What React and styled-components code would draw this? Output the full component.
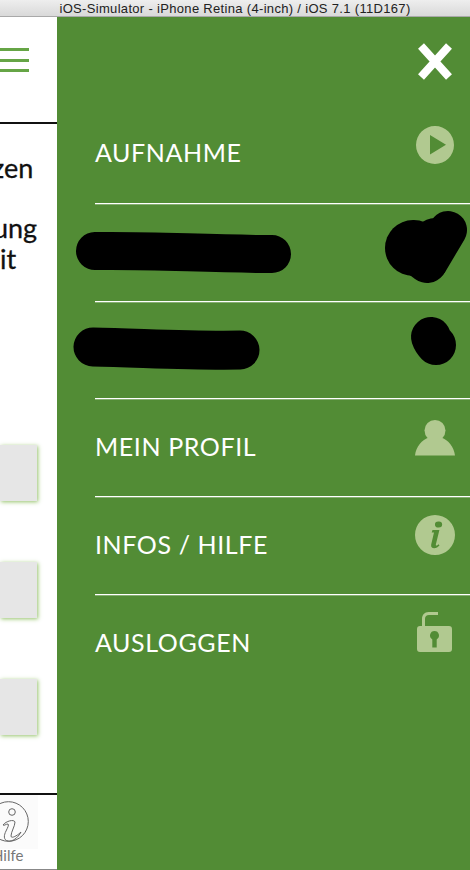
import styled, { createGlobalStyle } from 'styled-components';

const GlobalStyle = createGlobalStyle`
  html, body {
    margin: 0;
    padding: 0;
    background: #fff;
  }
`;

const menuItems = [
  { label: 'AUFNAHME', icon: 'play' },
  { label: '', icon: '', scribble: 'row2' },
  { label: '', icon: '', scribble: 'row3' },
  { label: 'MEIN PROFIL', icon: 'user' },
  { label: 'INFOS / HILFE', icon: 'info' },
  { label: 'AUSLOGGEN', icon: 'lock' },
];

const PlayIcon = () => (
  <IconSvg width="40" height="40" viewBox="0 0 40 40">
    <path
      fillRule="evenodd"
      d="M20 1a19 19 0 1 1 0 38a19 19 0 1 1 0-38zM15 10v19.500l16-9.700z"
    />
  </IconSvg>
);

const UserIcon = () => (
  <IconSvg width="42" height="36" viewBox="0 0 42 36">
    <circle cx="21" cy="10.500" r="10.500" />
    <path d="M1 35.500c1-9 7-16 14-18c4 2 8 2 12 0c7 2 13 9 14 18z" />
  </IconSvg>
);

const InfoIcon = () => (
  <IconSvg width="40" height="40" viewBox="0 0 40 40">
    <path
      fillRule="evenodd"
      d="M20 0a20 20 0 1 1 0 40a20 20 0 1 1 0-40zM23.500 6.500a3.300 3 -15 1 0 0.100 6a3.300 3 -15 1 0-0.100-6zM17.500 15l-0.800 2.500h2.300l-2.800 12c-0.500 2.600 0.800 3.800 3 3.800c2 0 3.800-1 5.300-3l-1-1c-0.700 0.800-1.500 1.300-2 1.300c-0.600 0-0.800-0.500-0.600-1.300l3.500-14.300z"
    />
  </IconSvg>
);

const LockIcon = () => (
  <IconSvg width="36" height="40" viewBox="0 0 36 40">
    <path
      fillRule="evenodd"
      d="M3 14h29a3 3 0 0 1 3 3v20a3 3 0 0 1-3 3h-29a3 3 0 0 1-3-3v-20a3 3 0 0 1 3-3zM17.500 19a4.500 4.500 0 0 0-2.200 8.400v8.100h4.400v-8.100a4.500 4.500 0 0 0-2.200-8.400z"
    />
    <path d="M5 14v-7c0-4 2.500-7 6.500-7h9.500v3h-9c-2.500 0-4 1.500-4 4v7z" />
  </IconSvg>
);

const icons = { play: PlayIcon, user: UserIcon, info: InfoIcon, lock: LockIcon };

// the two rows that are blacked out by hand in the picture
const renderScribble = (name) => {
  if (name === 'row2') {
    return (
      <>
        <Scribble $left={-20} $top={25} width="220" height="46" viewBox="0 0 220 46">
          <path d="M20 22C80 21 130 25 197 25" strokeWidth="38" />
        </Scribble>
        <Scribble $left={290} $top={6} width="86" height="74" viewBox="0 0 86 74">
          <path d="M28 38L29 38" strokeWidth="56" />
          <path d="M63 20L44 52" strokeWidth="38" />
          <path d="M50 30L35 45" strokeWidth="44" />
          <path d="M30 44L42 53" strokeWidth="40" />
        </Scribble>
      </>
    );
  }
  return (
    <>
      <Scribble $left={-22} $top={25} width="190" height="46" viewBox="0 0 190 46">
        <path d="M20 20C70 21 120 24 167 23" strokeWidth="39" />
      </Scribble>
      <Scribble $left={316} $top={15} width="48" height="50" viewBox="0 0 48 50">
        <path d="M20 20C21 23 23 26 25 28" strokeWidth="40" />
      </Scribble>
    </>
  );
};

export default () => {
  return (
    <>
      <GlobalStyle />
      <Screen>
        <TitleBar>iOS-Simulator - iPhone Retina (4-inch) / iOS 7.1 (11D167)</TitleBar>
        <Stage>
          <PagePeek>
            <PageHeader>
              <Burger>
                <span />
                <span />
                <span />
              </Burger>
            </PageHeader>
            <PageBody>
              <Heading>zen</Heading>
              <IntroLine $shift={-7}>ung</IntroLine>
              <IntroLine $shift={0}>it</IntroLine>
              <Tiles>
                <Tile />
                <Tile />
                <Tile />
              </Tiles>
            </PageBody>
            <TabBar>
              <TabBadge>
                <svg width="41" height="41" viewBox="0 0 41 41" fill="none" stroke="#666" strokeWidth="1">
                  <circle cx="20.500" cy="20.500" r="19.800" />
                  <circle cx="24" cy="11" r="3.300" />
                  <path d="M15 24C18 20 26 18 27 21C27 25 23 31 23 35C23 38 29 35 33 31C30 37 24 41 20 40C15 39 16 34 18 30C20 26 21 24 20 23C18 23 16 25 15 24z" />
                </svg>
              </TabBadge>
              <TabLabel>Hilfe</TabLabel>
            </TabBar>
          </PagePeek>
          <Menu>
            <CloseButton>
              <svg width="34" height="37" viewBox="0 0 34 37">
                <path d="M3 3L31 34M31 3L3 34" fill="none" stroke="#fff" strokeWidth="8" />
              </svg>
            </CloseButton>
            <MenuList>
              {menuItems.map(({ label, icon, scribble }, index) => {
                const Icon = icons[icon];

                return (
                  <MenuRow key={index} $last={index === menuItems.length - 1}>
                    <MenuLabel>{label}</MenuLabel>
                    {Icon && (
                      <IconSlot $icon={icon}>
                        <Icon />
                      </IconSlot>
                    )}
                    {scribble && renderScribble(scribble)}
                  </MenuRow>
                );
              })}
            </MenuList>
          </Menu>
        </Stage>
      </Screen>
    </>
  );
};

const Screen = styled.div`
  width: 470px;
  height: 870px;
  display: flex;
  flex-direction: column;
  overflow: hidden;
`;

const TitleBar = styled.div`
  height: 16px;
  flex: none;
  display: flex;
  align-items: center;
  justify-content: center;
  background: linear-gradient(#eeeeee, #d9d9d9);
  border-bottom: 1px solid #a9a9a9;
  font-family: 'Liberation Sans', Arial, sans-serif;
  font-size: 13px;
  letter-spacing: 0.32px;
  color: #222;
  white-space: nowrap;
`;

const Stage = styled.div`
  flex: 1;
  display: flex;
  min-height: 0;
`;

const PagePeek = styled.div`
  width: 57px;
  flex: none;
  box-sizing: border-box;
  display: flex;
  flex-direction: column;
  background: #fff;
  border-bottom: 1px solid #888;
  overflow: hidden;
`;

const PageHeader = styled.div`
  height: 107px;
  flex: none;
  box-sizing: border-box;
  padding-top: 31px;
  border-bottom: 2px solid #111;
`;

const Burger = styled.div`
  width: 29px;
  display: flex;
  flex-direction: column;
  gap: 7.500px;

  span {
    display: block;
    height: 3px;
    background: #66a546;
  }
`;

const PageBody = styled.div`
  flex: 1;
  min-height: 0;
  font-family: Lato, sans-serif;
  font-size: 27px;
  color: #111;
  -webkit-text-stroke: 0.3px #111;
`;

const Heading = styled.div`
  margin: 29px 0 29px -8px;
  line-height: 30px;
  white-space: nowrap;
`;

const IntroLine = styled.div`
  margin-left: ${({ $shift }) => $shift}px;
  line-height: 31px;
  white-space: nowrap;
`;

const Tiles = styled.div`
  margin-top: 171px;
  display: flex;
  flex-direction: column;
  gap: 61px;
`;

const Tile = styled.div`
  width: 37px;
  height: 56px;
  background: #e6e6e6;
  box-shadow: 1px 1px 4px rgba(130, 185, 80, 0.85);
`;

const TabBar = styled.div`
  height: 76px;
  flex: none;
  box-sizing: border-box;
  border-top: 2px solid #111;
  display: flex;
  flex-direction: column;
  align-items: flex-start;
  font-family: Lato, sans-serif;
`;

const TabBadge = styled.div`
  width: 50px;
  height: 54px;
  flex: none;
  box-sizing: border-box;
  margin-left: -12px;
  padding-top: 6px;
  background: #fbfbfb;
`;

const TabLabel = styled.div`
  margin: -2px 0 0 -8px;
  font-size: 15px;
  line-height: 16px;
  color: #777;
`;

const Menu = styled.div`
  flex: 1;
  min-width: 0;
  background: #528c35;
  padding-left: 38px;
`;

const CloseButton = styled.div`
  height: 89px;
  box-sizing: border-box;
  padding: 26px 18px 0 0;
  display: flex;
  justify-content: flex-end;
`;

const MenuList = styled.div`
  display: flex;
  flex-direction: column;
`;

const MenuRow = styled.div`
  position: relative;
  height: 97.800px;
  box-sizing: border-box;
  display: flex;
  align-items: center;
  justify-content: space-between;
  border-bottom: ${({ $last }) => ($last ? 'none' : '1px solid #fff')};
  box-shadow: ${({ $last }) => ($last ? 'none' : '0 1px 0 rgba(255, 255, 255, 0.3)')};
`;

const MenuLabel = styled.div`
  font-family: Lato, sans-serif;
  font-size: 25px;
  font-weight: 400;
  letter-spacing: 0.6px;
  color: #fff;
  white-space: nowrap;
  margin-bottom: 4px;
`;

const iconOffsets = {
  play: '-19px',
  user: '-20px',
  info: '-21px',
  lock: '-24px',
};

const IconSlot = styled.div`
  display: flex;
  justify-content: center;
  width: 42px;
  margin-right: 14px;
  margin-top: ${({ $icon }) => iconOffsets[$icon]};
`;

const IconSvg = styled.svg`
  display: block;
  fill: #b1c990;
`;

const Scribble = styled.svg`
  position: absolute;
  left: ${({ $left }) => $left}px;
  top: ${({ $top }) => $top}px;
  overflow: visible;
  fill: none;
  stroke: #000;
  stroke-linecap: round;
  stroke-linejoin: round;
`;
